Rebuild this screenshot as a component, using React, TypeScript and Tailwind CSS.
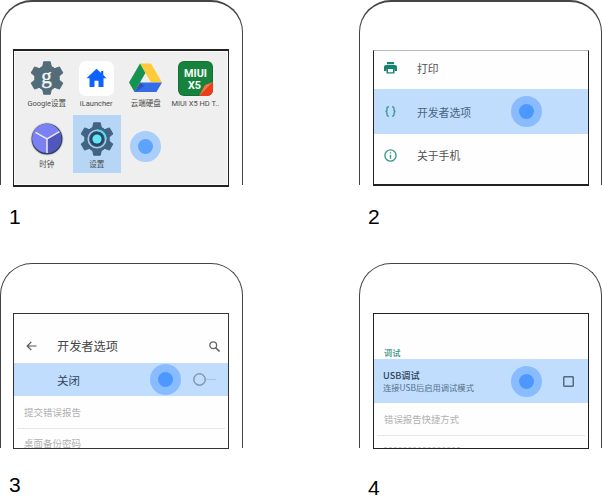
import type { ReactNode } from "react";

function Phone({ children, className }: { children: ReactNode; className: string }) {
  return <div className={`flex h-[185px] w-[243px] rounded-t-[32px] border-x border-[#444] ${className}`}>{children}</div>;
}

function Touch({ soft }: { soft?: boolean }) {
  return (
    <div className={`flex h-[31px] w-[31px] shrink-0 items-center justify-center rounded-full ${soft ? "bg-[#a9cef9]" : "bg-[#88bcff]"}`}>
      <div className={`h-[15px] w-[15px] rounded-full ${soft ? "bg-[#5ba3fb]" : "bg-[#4c98ff]"}`} />
    </div>
  );
}

function Gear({ color }: { color: string }) {
  return (
    <g fill={color} stroke={color} strokeWidth="1" strokeLinejoin="round">
      <circle cx="17" cy="17" r="12.3" />
      {[0, 60, 120, 180, 240, 300].map((angle) => (
        <path key={angle} d="M13.700.8h6.600l1.200 5.700h-9z" transform={`rotate(${angle} 17 17)`} />
      ))}
    </g>
  );
}

function GoogleSettingsIcon() {
  return (
    <svg width="34" height="34" viewBox="0 0 34 34">
      <Gear color="#536c79" />
      <text x="16.500" y="21.500" textAnchor="middle" fontFamily="Liberation Serif, serif" fontSize="21" fill="#f2f5f6" stroke="#f2f5f6" strokeWidth="0.400">
        g
      </text>
    </svg>
  );
}

function LauncherIcon() {
  return (
    <div className="flex h-[35px] w-[35px] items-center justify-center rounded-[7px] bg-white">
      <svg width="21" height="20" viewBox="0 0 21 20">
        <path d="M10.5.7.5 10.2h3V19h5v-6.2h4V19h5v-8.800h3l-3.200-3.100V3h-2.200v2z" fill="#0d63ff" />
      </svg>
    </div>
  );
}

function DriveIcon() {
  return (
    <svg width="33" height="30" viewBox="0 0 33 30">
      <path d="M11 .5h11L33 19.500H22z" fill="#ffca37" />
      <path d="M11 .5 0 19.500l5.500 9.500L16.400 10z" fill="#179351" />
      <path d="M11.200 19.500H33L27.500 29h-22z" fill="#356de6" />
      <path d="m11.200 19.500-5.700 9.500 10-6z" fill="#2b55bd" />
    </svg>
  );
}

function MiuiIcon() {
  return (
    <svg width="35" height="35" viewBox="0 0 35 35">
      <rect width="35" height="35" rx="6" fill="#127034" />
      <rect x="1" y="1" width="33" height="33" rx="5" fill="#17823e" />
      <path d="M21 35 35 21v8a6 6 0 0 1-6 6z" fill="#f03b16" />
      <path d="M21 35 35 21l-8 3z" fill="#fb704b" />
      <g fill="#f5fff7" fontFamily="Roboto, sans-serif" fontWeight="700" textAnchor="middle">
        <text x="17.500" y="15.500" fontSize="10.500" textLength="23" lengthAdjust="spacingAndGlyphs">MIUI</text>
        <text x="16.500" y="28" fontSize="10.500" textLength="13" lengthAdjust="spacingAndGlyphs">X5</text>
      </g>
    </svg>
  );
}

function ClockIcon() {
  return (
    <svg width="34" height="34" viewBox="0 0 34 34">
      <circle cx="17" cy="17" r="16.500" fill="#cfd6d6" />
      <circle cx="17" cy="17" r="15.500" fill="#334260" />
      <circle cx="16.600" cy="16.300" r="14.500" fill="#7b80f3" />
      <path d="M17 17 29.500 9.700A14.500 14.500 0 0 1 17 31z" fill="#5257bd" />
      <path d="m5.500 10.300 11.500 6.700 12.500-7.300M17 17v14" fill="none" stroke="#e9eaff" strokeWidth="1.500" />
    </svg>
  );
}

function SettingsIcon() {
  return (
    <svg width="34" height="34" viewBox="0 0 34 34">
      <Gear color="#416484" />
      <circle cx="17" cy="17" r="8.800" fill="none" stroke="#a7cbea" strokeWidth="1.600" />
      <path d="M17 8.200a8.800 8.800 0 0 1 8.800 8.800" fill="none" stroke="#54dcf0" strokeWidth="2" />
      <circle cx="17" cy="17" r="7" fill="#294760" />
      <circle cx="17" cy="17" r="4.600" fill="#65e5f5" />
    </svg>
  );
}

function AppCell({ label, active, children }: { label: string; active?: boolean; children: ReactNode }) {
  return (
    <div className={`flex h-[58px] flex-col items-center pt-1.5 ${active ? "mr-[0.5px] ml-[1.5px] bg-[#b7d5f5]" : ""}`}>
      <div className="flex h-9 items-center">{children}</div>
      <span className="mt-[3px] font-[Roboto,'Noto_Sans_CJK_SC',sans-serif] text-[7.5px] leading-[10px] whitespace-nowrap text-[#4c4c4c]">{label}</span>
    </div>
  );
}

function LauncherScreen() {
  return (
    <div className="h-[138px] w-[216px] border-x border-t-2 border-b-2 border-[#222] bg-[#efefef] px-2 pt-[3px] shadow-[inset_0_0_0_1px_#fafafa]">
      <div className="grid grid-cols-4 gap-y-[3px]">
        <AppCell label="Google设置"><GoogleSettingsIcon /></AppCell>
        <AppCell label="iLauncher"><LauncherIcon /></AppCell>
        <AppCell label="云端硬盘"><DriveIcon /></AppCell>
        <AppCell label="MIUI X5 HD T.."><MiuiIcon /></AppCell>
        <AppCell label="时钟"><ClockIcon /></AppCell>
        <AppCell label="设置" active><SettingsIcon /></AppCell>
        <div className="flex h-[58px] items-center justify-center pt-1"><Touch soft /></div>
      </div>
    </div>
  );
}

function SettingsRow({ icon, label }: { icon: ReactNode; label: string }) {
  return (
    <>
      <div className="flex w-[33px] justify-center">{icon}</div>
      <span className="ml-[10px] text-[10.8px] leading-4">{label}</span>
    </>
  );
}

function SettingsScreen() {
  return (
    <div className="flex h-[136px] w-[216px] flex-col border border-b-2 border-[#222] border-t-[#bbb] bg-[#fefefe] text-[#505050]">
      <div className="flex h-[38px] items-center pb-1">
        <SettingsRow
          label="打印"
          icon={
            <svg width="13" height="12" viewBox="0 0 13 12" fill="#158371">
              <path d="M3 0h7v2.300H3zM2 3h9a2 2 0 0 1 2 2v4h-2.500V7h-8v2H0V5a2 2 0 0 1 2-2z" />
              <path d="M2.500 6.500h8V11.500h-8zM4 7v3.300h5V7z" fillRule="evenodd" />
            </svg>
          }
        />
      </div>
      <div className="flex h-[45px] items-center bg-[#c0ddfe] text-[#47647e]">
        <SettingsRow
          label="开发者选项"
          icon={
            <svg width="11" height="11" viewBox="0 0 11 11" fill="none" stroke="#36929c" strokeWidth="1.300">
              <path d="M4 .8H3.200C2.200.8 2 1.400 2 2.200v1.600C2 5 1.500 5.500.5 5.500 1.500 5.500 2 6 2 7.200v1.600c0 .8.200 1.400 1.200 1.400H4M7 .8h.8C8.800.8 9 1.400 9 2.200v1.600C9 5 9.500 5.500 10.500 5.500 9.500 5.500 9 6 9 7.200v1.600c0 .8-.2 1.400-1.200 1.400H7" />
            </svg>
          }
        />
        <div className="ml-[40px]"><Touch /></div>
      </div>
      <div className="flex h-[42px] items-center">
        <SettingsRow
          label="关于手机"
          icon={
            <svg width="13" height="13" viewBox="0 0 13 13" fill="none" stroke="#3d9b8e" strokeWidth="1.400">
              <circle cx="6.500" cy="6.500" r="5.600" />
              <path d="M6.500 3.200v1.300M6.500 5.700v4" />
            </svg>
          }
        />
      </div>
    </div>
  );
}

function DeveloperScreen() {
  return (
    <div className="flex h-[136px] w-[216px] flex-col overflow-hidden border border-[#333] bg-[#fefefe]">
      <div className="flex h-[49px] shrink-0 items-center pt-[15px] pl-3 text-[#444]">
        <svg width="11" height="10" viewBox="0 0 11 10" fill="none" stroke="#555" strokeWidth="1.200">
          <path d="M10.500 5H1.200M5.300.8 1.200 5l4.100 4.200" />
        </svg>
        <span className="ml-5 text-[12.2px] leading-4">开发者选项</span>
        <svg className="ml-[91px]" width="11" height="11" viewBox="0 0 11 11" fill="none" stroke="#666" strokeWidth="1.300">
          <circle cx="4.200" cy="4.200" r="3.400" />
          <path d="m6.700 6.700 3.800 3.800" strokeWidth="1.600" />
        </svg>
      </div>
      <div className="flex h-[33px] shrink-0 items-center bg-[#c0ddfe] pl-[43px]">
        <span className="w-[93px] text-[11.4px] leading-4 text-[#314456]">关闭</span>
        <Touch />
        <div className="ml-3 h-[13px] w-[13px] rounded-full border-[1.5px] border-[#7890aa] shadow-[inset_0_0_0_0.5px_#7890aa]" />
        <div className="h-px w-[10px] bg-[#a9c3df]" />
      </div>
      <div className="mx-[3px] flex h-[33px] shrink-0 items-center border-b border-[#e6e6e6] pl-[7px] text-[9.500px] text-[#b0b0b0]">提交错误报告</div>
      <div className="flex h-[29px] shrink-0 items-center pl-[10px] text-[9.500px] text-[#b0b0b0]">桌面备份密码</div>
    </div>
  );
}

function DebugScreen() {
  return (
    <div className="flex h-[136px] w-[216px] flex-col overflow-hidden border border-[#222] bg-[#fefefe]">
      <div className="flex h-[45px] shrink-0 items-end pb-[2px] pl-[10px] text-[8.200px] leading-[10px] font-medium text-[#399786]">调试</div>
      <div className="flex h-[44px] shrink-0 items-center bg-[#c0ddfe] pl-[9px]">
        <div className="flex w-[128px] flex-col whitespace-nowrap">
          <span className="text-[9.200px] leading-3 font-medium text-[#304255]">USB调试</span>
          <span className="text-[8.300px] leading-3 text-[#54708b]">连接USB后启用调试模式</span>
        </div>
        <Touch />
        <div className="ml-[21px] h-[11px] w-[11px] rounded-[1px] border border-[#536a82] shadow-[inset_0_0_0_0.5px_#536a82]" />
      </div>
      <div className="mx-[3px] flex h-[33px] shrink-0 items-center border-b border-[#e6e6e6] pl-[7px] text-[9.400px] text-[#b0b0b0]">错误报告快捷方式</div>
      <div className="mt-auto ml-[10px] w-[76px] border-b border-dashed border-[#ccc]" />
    </div>
  );
}

export default function App() {
  return (
    <main className="grid h-[503px] w-[602px] grid-cols-[359px_243px] grid-rows-[263px_240px] overflow-hidden bg-white font-['Noto_Sans_CJK_SC',sans-serif]">
      <section>
        <Phone className="border-t-2 pt-[47px] pl-3"><LauncherScreen /></Phone>
        <p className="mt-5 ml-[9px] font-['Liberation_Sans',sans-serif] text-[21px] leading-6 text-black">1</p>
      </section>
      <section>
        <Phone className="border-t-2 pt-12 pl-[13px]"><SettingsScreen /></Phone>
        <p className="mt-5 ml-[9px] font-['Liberation_Sans',sans-serif] text-[21px] leading-6 text-black">2</p>
      </section>
      <section>
        <Phone className="border-t pt-[49px] pl-3"><DeveloperScreen /></Phone>
        <p className="mt-[25px] ml-[9px] font-['Liberation_Sans',sans-serif] text-[21px] leading-6 text-black">3</p>
      </section>
      <section>
        <Phone className="border-t pt-[49px] pl-[13px]"><DebugScreen /></Phone>
        <p className="mt-[28px] ml-[9px] font-['Liberation_Sans',sans-serif] text-[21px] leading-6 text-black">4</p>
      </section>
    </main>
  );
}
